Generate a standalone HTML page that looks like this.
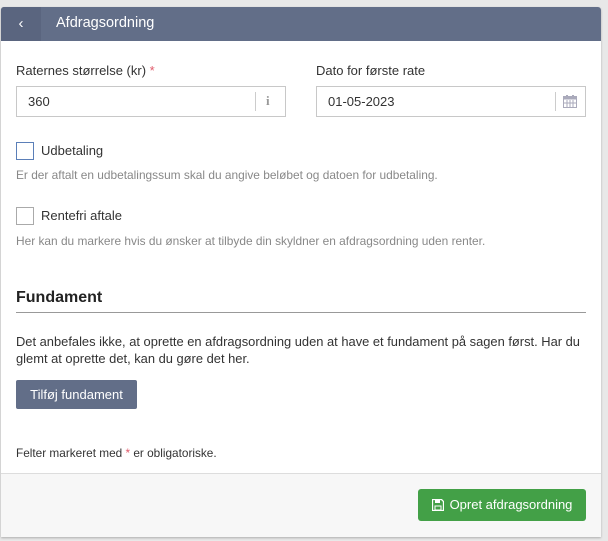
<!DOCTYPE html>
<html><head><meta charset="utf-8"><style>
*{box-sizing:border-box;margin:0;padding:0}
body{width:608px;height:541px;background:#e8e8e8;font-family:"Liberation Sans",Arial,sans-serif;color:#333;position:relative;overflow:hidden}
.card{position:absolute;left:1px;top:7px;width:600px;height:530px;background:#fff;border-radius:3px 3px 0 0;box-shadow:0 1px 2px rgba(0,0,0,.25);overflow:hidden}
.hdr{position:absolute;left:0;top:0;width:600px;height:34px;background:#626e88}
.back{position:absolute;left:0;top:0;width:40px;height:34px;background:#5a657f;color:#fff;font-size:15px;text-align:center;line-height:33px}
.title{position:absolute;left:55px;top:0;line-height:33px;color:#fff;font-size:14.5px}
.a{position:absolute;white-space:nowrap}
.lbl{font-size:13px;color:#333}
.inp{position:absolute;height:31px;border:1px solid #c8c8c8;background:#fff}
.inp span{position:absolute;left:11px;top:0;line-height:29px;font-size:13px;color:#333}
.sep{position:absolute;top:5px;width:1px;height:19px;background:#ccc}
.cb{position:absolute;width:18px;height:18px;border:1px solid #aaa;background:#fff}
.help{font-size:11.9px;color:#888}
.btn{position:absolute;color:#fff;font-size:13px;border-radius:2px;text-align:center}
.foot{position:absolute;left:0;top:466px;width:600px;height:64px;background:#f7f7f7;border-top:1px solid #ddd}
</style></head><body>
<div class="card">
<div class="hdr"><div class="back">&lsaquo;</div><div class="title">Afdragsordning</div></div>
<div class="a lbl" style="left:15px;top:56px">Raternes størrelse (kr) <span style="color:#e05a6a">*</span></div>
<div class="inp" style="left:15px;top:79px;width:270px"><span>360</span><div class="sep" style="left:238px"></div><div style="position:absolute;left:249px;top:6px;font:bold 13px 'Liberation Serif',serif;color:#999">i</div></div>
<div class="a lbl" style="left:315px;top:56px">Dato for første rate</div>
<div class="inp" style="left:315px;top:79px;width:270px"><span>01-05-2023</span><div class="sep" style="left:238px"></div>
<svg style="position:absolute;left:246px;top:8px" width="14" height="13" viewBox="0 0 14 13"><rect x="0.5" y="1.5" width="13" height="11" fill="none" stroke="#aab" /><rect x="0.5" y="1.5" width="13" height="3" fill="#aab"/><path d="M4 5v7M7 5v7M10 5v7M1 8h12" stroke="#aab"/><rect x="3" y="0" width="2" height="3" fill="#aab"/><rect x="9" y="0" width="2" height="3" fill="#aab"/></svg></div>
<div class="cb" style="left:15px;top:135px;border-color:#5b7fb8"></div>
<div class="a lbl" style="left:40px;top:136px">Udbetaling</div>
<div class="a help" style="left:15px;top:161px">Er der aftalt en udbetalingssum skal du angive beløbet og datoen for udbetaling.</div>
<div class="cb" style="left:15px;top:200px"></div>
<div class="a lbl" style="left:40px;top:201px">Rentefri aftale</div>
<div class="a help" style="left:15px;top:227px">Her kan du markere hvis du ønsker at tilbyde din skyldner en afdragsordning uden renter.</div>
<div class="a" style="left:15px;top:282px;font-size:16px;font-weight:bold;color:#222">Fundament</div>
<div class="a" style="left:15px;top:305px;width:570px;height:1px;background:#999"></div>
<div class="a" style="left:15px;top:326px;font-size:12.9px;line-height:17px;color:#333">Det anbefales ikke, at oprette en afdragsordning uden at have et fundament på sagen først. Har du<br>glemt at oprette det, kan du gøre det her.</div>
<div class="btn" style="left:15px;top:373px;width:121px;height:29px;line-height:29px;background:#626e88">Tilføj fundament</div>
<div class="a" style="left:15px;top:439px;font-size:11.8px;color:#333">Felter markeret med <span style="color:#e05a6a">*</span> er obligatoriske.</div>
<div class="foot"></div>
<div class="btn" style="left:417px;top:482px;width:168px;height:32px;line-height:32px;background:#43a047;border-radius:3px">
<svg style="vertical-align:-2px;margin-right:6px" width="12" height="12" viewBox="0 0 12 12"><path d="M0.5 0.5h9l2 2v9h-11z" fill="none" stroke="#fff" stroke-width="1.3"/><rect x="3" y="1" width="5" height="3" fill="#fff"/><rect x="3" y="7" width="6" height="4" fill="none" stroke="#fff"/></svg>Opret afdragsordning</div>
</div>
</body></html>
